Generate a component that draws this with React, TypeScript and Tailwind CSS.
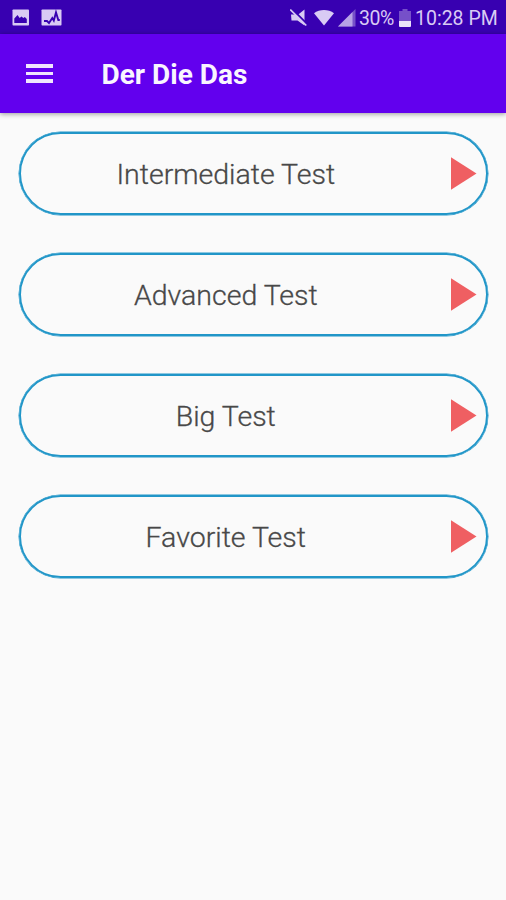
import { useState } from 'react'

const tests = ['Intermediate Test', 'Advanced Test', 'Big Test', 'Favorite Test']

function StatusBar() {
  return (
    <div className="flex h-[34px] items-center bg-[#3800b1] pl-[12px] pr-[8px] pt-[2px] text-[#d9cbf4]">
      {/* Notifications */}
      <svg width="18" height="18" viewBox="0 0 18 18" className="-mt-px shrink-0">
        <rect x="0.5" y="0.5" width="16.5" height="16" rx="0.8" fill="currentColor" />
        <path d="M2.3 14V9.500L5.500 6l2.200 3 1.700-1.400 2 1.400 1.400-1 2 2v4z" fill="#3800b1" />
      </svg>
      <svg width="22" height="18" viewBox="0 0 22 18" className="-mt-px ml-[11px] shrink-0">
        <rect x="0.5" y="0.5" width="20" height="16" rx="0.8" fill="currentColor" />
        <path d="M3 12h3l2 2 3.300-5 1.500 2.500L15 3.500l2.300 7.500h1.500" fill="none" stroke="#3800b1" strokeWidth="1.900" />
      </svg>

      {/* System icons */}
      <svg width="20" height="20" viewBox="0 0 20 20" className="ml-auto shrink-0">
        <path d="M1 6.500h4.500l1.500 1L14.500 1.500v16L7.500 12.500H1.500z" fill="currentColor" />
        <path d="M2 1l16 16" fill="none" stroke="#3800b1" strokeWidth="2" />
        <path d="M0.300 1.500L16.300 17.500" fill="none" stroke="currentColor" strokeWidth="1.700" />
      </svg>
      <svg width="20" height="18" viewBox="0 0 20 18" className="ml-[4px] shrink-0">
        <path d="M0 4.200C5.500-.2 14.500-.2 20 4.200L10 16.500z" fill="currentColor" />
      </svg>
      <svg width="18" height="18" viewBox="0 0 18 18" className="ml-[4px] shrink-0">
        <path d="M0 17.500L17.500 0v17.500z" fill="#7650c9" />
        <path d="M0 17.500L14.500 3v14.500z" fill="#b7a2e6" />
      </svg>
      <span className="ml-[3px] w-[35px] whitespace-nowrap pt-[2px] text-[19.500px] leading-none tracking-[-0.5px]">30%</span>
      <svg width="12" height="19" viewBox="0 0 12 19" className="ml-[5px] shrink-0">
        <path d="M3.500 0h5v2H12v11H0V2h3.500z" fill="#7650c9" />
        <path d="M0 12h12v5a1 1 0 0 1-1 1H1a1 1 0 0 1-1-1z" fill="#e9e1fa" />
      </svg>
      <span className="ml-[4px] w-[83px] whitespace-nowrap pt-[2px] text-[19.500px] leading-none">10:28 PM</span>
    </div>
  )
}

export default function App() {
  const [selected, setSelected] = useState<string | null>(null)

  return (
    <div className="h-[900px] w-[506px] overflow-hidden bg-[#fafafa] font-['Roboto',sans-serif]">
      <StatusBar />

      {/* App bar */}
      <header className="flex h-[78.500px] items-center bg-[#6200ee] pl-[26px] shadow-[0_1px_5px_rgba(0,0,0,0.4)]">
        <button aria-label="Open menu" className="flex w-[27px] flex-col gap-[4px]">
          <span className="h-[3.500px] bg-[#f0e5fe]" />
          <span className="h-[3.500px] bg-[#f0e5fe]" />
          <span className="h-[3.500px] bg-[#f0e5fe]" />
        </button>
        <h1 className="ml-[48.500px] mt-[3px] text-[28px] font-bold leading-none text-[#f9f5ff]">Der Die Das</h1>
      </header>

      {/* Test list */}
      <main className="flex flex-col gap-[38px] pl-[19px] pr-[18px] pt-[19.500px]">
        {tests.map((test) => (
          <button
            key={test}
            aria-pressed={selected === test}
            onClick={() => setSelected(test)}
            className="flex h-[83px] items-center rounded-full border-2 border-[#2196c8] pr-[9.500px] text-[#484848] shadow-[0_0_0_0.500px_#2196c8]"
          >
            <span className="flex-1 pr-[20px] pt-[4px] text-center text-[28.500px] font-light leading-none [-webkit-text-stroke:0.3px_#484848]">{test}</span>
            <svg width="26" height="34" viewBox="0 0 26 34" className="shrink-0">
              <path d="M0 0.300l25.500 16.300L0 32.800z" fill="#ef5f62" />
            </svg>
          </button>
        ))}
      </main>
    </div>
  )
}
